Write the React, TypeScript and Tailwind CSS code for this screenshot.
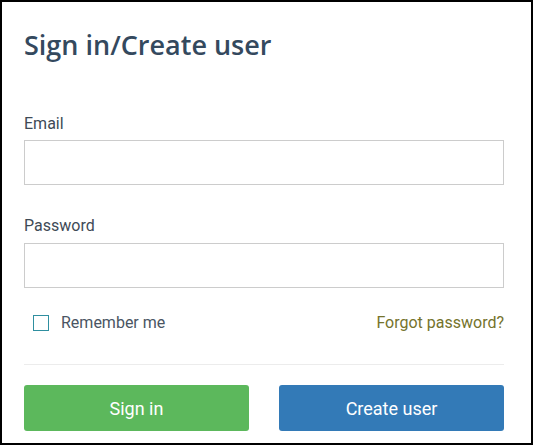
import React, { useState } from 'react';

export default function App() {
  const [remember, setRemember] = useState(false);

  return (
    <div className="w-[533px] h-[445px] border-2 border-black bg-white" style={{ fontFamily: 'Roboto, "Liberation Sans", sans-serif' }}>
      <div className="pl-[22px] pr-[27px] pt-[26px]">
        {/* Titre */}
        <h1 className="text-[27px] leading-[34px] font-semibold text-[#34495e]" style={{ fontFamily: '"Open Sans", "Liberation Sans", sans-serif' }}>
          Sign in/Create user
        </h1>

        <form className="mt-[52px]" onSubmit={e => e.preventDefault()}>
          <label className="block text-[16px] leading-[20px] text-[#3e4a56] mb-[6px]">Email</label>
          <input type="email" className="block w-full h-[45px] border border-[#cccccc] bg-white px-3 outline-none" />

          <label className="block text-[16px] leading-[20px] text-[#3e4a56] mt-[31px] mb-[7px]">Password</label>
          <input type="password" className="block w-full h-[45px] border border-[#cccccc] bg-white px-3 outline-none" />

          {/* Options */}
          <div className="flex items-center justify-between mt-[23px] pl-[9px]">
            <label className="flex items-center gap-[12px] cursor-pointer">
              <span onClick={() => setRemember(!remember)}
                className="w-[16px] h-[16px] border border-[#2f8fa0] bg-white inline-block" />
              <span className="text-[16px] text-[#4a5563]">Remember me</span>
            </label>
            <a href="#" className="text-[16px] text-[#75732c]">Forgot password?</a>
          </div>

          <div className="h-px bg-[#ececec] mt-[29px]" />

          {/* Boutons */}
          <div className="grid grid-cols-2 gap-[30px] mt-[20px]">
            <button type="submit" className="h-[46px] rounded-[3px] bg-[#5cb85c] text-white text-[18px]">Sign in</button>
            <button type="button" className="h-[46px] rounded-[3px] bg-[#337ab7] text-white text-[18px]">Create user</button>
          </div>
        </form>
      </div>
    </div>
  );
}
